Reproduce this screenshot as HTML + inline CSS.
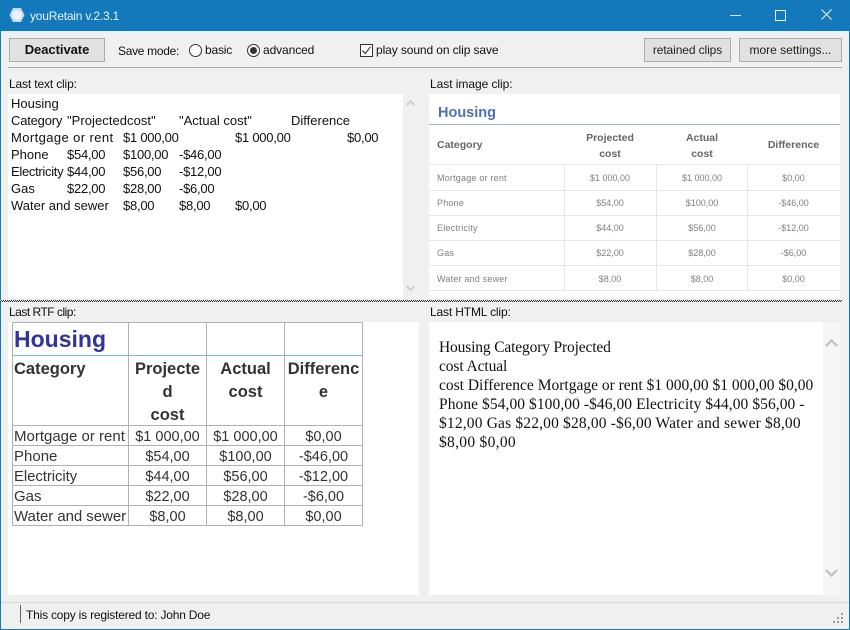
<!DOCTYPE html>
<html><head><meta charset="utf-8"><style>
html,body{margin:0;padding:0;background:#f0f0f0}
#w{position:relative;width:850px;height:630px;overflow:hidden;background:#f0f0f0;font:12px "Liberation Sans",sans-serif;color:#111}
#w div{position:absolute;white-space:nowrap}
.b{background:#e1e1e1;border:1px solid #adadad;box-sizing:border-box;text-align:center;color:#222}
.wh{background:#fff}
.l{line-height:16px;height:16px}
.tx{font-size:13px;line-height:17px;letter-spacing:0}
.n{letter-spacing:-.25px}
.img{color:#808080;font-size:9px;line-height:12px;text-align:center}
.il{letter-spacing:.2px}
.imgb{color:#666;font-weight:bold;font-size:10.5px;line-height:16px;text-align:center}
.ln{background:#e6e6e6}
.r{font-size:15px;line-height:20px;color:#333;margin-top:1px}
.c{text-align:center;font-size:14.5px}
.rb{font-size:16.5px;font-weight:bold;line-height:23px;color:#333;text-align:center;margin-top:1px}
.g{background:#b0b0b0}
.h{font:15.5px "Liberation Serif",serif;line-height:19px;color:#111;left:439px}
</style></head><body><div id="w">

<div style="left:0;top:0;width:850px;height:31px;background:#1479bb"></div>
<div style="left:0;top:0;width:1px;height:630px;background:#1479bb"></div>
<div style="left:849px;top:0;width:1px;height:630px;background:#1479bb"></div>
<div style="left:0;top:629px;width:850px;height:1px;background:#1479bb"></div>
<svg style="position:absolute;left:9px;top:7px" width="16" height="16" viewBox="0 0 16 16"><polygon points="4,1 12,1 15.5,8 12,15 4,15 .5,8" fill="#c4d9f6"/><circle cx="8" cy="8" r="5" fill="#eaf2fe"/></svg>
<div style="left:30px;top:8px;color:#e6f1f8;font-size:12px;line-height:16px;letter-spacing:-.2px">youRetain v.2.3.1</div>
<div style="left:730px;top:15px;width:11px;height:1px;background:#dbeaf5"></div>
<div style="left:775px;top:10px;width:9px;height:9px;border:1px solid #e6f1f8"></div>
<svg style="position:absolute;left:821px;top:9px" width="11" height="11" viewBox="0 0 11 11"><path d="M.5.5L10.5 10.5M10.5.5L.5 10.5" stroke="#e6f1f8" stroke-width="1.1" fill="none"/></svg>

<div class="b" style="left:9px;top:38px;width:96px;height:24px;font-weight:bold;font-size:13px;line-height:22px;color:#111;letter-spacing:-.05px">Deactivate</div>
<div class="l" style="left:118px;top:43px;letter-spacing:-.3px">Save mode:</div>
<div style="left:189px;top:44px;width:11px;height:11px;border:1px solid #333;border-radius:50%;background:#fff"></div>
<div class="l" style="left:205px;top:42px;letter-spacing:-.2px">basic</div>
<div style="left:247px;top:44px;width:11px;height:11px;border:1px solid #333;border-radius:50%;background:#fff"></div>
<div style="left:250px;top:47px;width:7px;height:7px;border-radius:50%;background:#333"></div>
<div class="l" style="left:263px;top:42px;letter-spacing:-.1px">advanced</div>
<div style="left:360px;top:44px;width:11px;height:11px;border:1px solid #333;background:#fff"></div>
<svg style="position:absolute;left:361px;top:45px" width="11" height="11" viewBox="0 0 11 11"><path d="M1.5 5.5L4.2 8.5L9.5 1.8" stroke="#333" stroke-width="1.1" fill="none"/></svg>
<div class="l" style="left:376px;top:42px;letter-spacing:-.1px">play sound on clip save</div>
<div class="b" style="left:644px;top:38px;width:87px;height:24px;line-height:22px;letter-spacing:-.1px">retained clips</div>
<div class="b" style="left:739px;top:38px;width:103px;height:24px;line-height:22px">more settings...</div>
<div style="left:8px;top:67px;width:834px;height:1px;background:#a8a8a8"></div>

<div class="l" style="left:9px;top:76px;letter-spacing:-.15px">Last text clip:</div>
<div class="l" style="left:430px;top:76px;letter-spacing:-.05px">Last image clip:</div>
<div class="l" style="left:9px;top:304px;letter-spacing:-.5px">Last RTF clip:</div>
<div class="l" style="left:430px;top:304px;letter-spacing:-.15px">Last HTML clip:</div>

<div class="wh" style="left:8px;top:94px;width:395px;height:204px"></div>
<svg style="position:absolute;left:405px;top:99px" width="11" height="8" viewBox="0 0 11 8"><path d="M1.5 6L5.5 2L9.5 6" stroke="#d0d0d0" stroke-width="2" fill="none"/></svg>
<svg style="position:absolute;left:405px;top:284px" width="11" height="8" viewBox="0 0 11 8"><path d="M1.5 2L5.5 6L9.5 2" stroke="#d0d0d0" stroke-width="2" fill="none"/></svg>
<div class="tx" style="left:11px;top:95px">Housing</div>
<div class="tx" style="left:11px;top:112px;letter-spacing:-.2px">Category</div>
<div class="tx" style="left:67px;top:112px;letter-spacing:.05px">"Projectedcost"</div>
<div class="tx" style="left:179px;top:112px">"Actual cost"</div>
<div class="tx" style="left:291px;top:112px">Difference</div>
<div class="tx" style="left:11px;top:129px;letter-spacing:.4px">Mortgage or rent</div>
<div class="tx n" style="left:123px;top:129px">$1 000,00</div>
<div class="tx n" style="left:235px;top:129px">$1 000,00</div>
<div class="tx n" style="left:347px;top:129px">$0,00</div>
<div class="tx" style="left:11px;top:146px">Phone</div>
<div class="tx n" style="left:67px;top:146px">$54,00</div>
<div class="tx n" style="left:123px;top:146px">$100,00</div>
<div class="tx n" style="left:179px;top:146px">-$46,00</div>
<div class="tx" style="left:11px;top:163px;letter-spacing:-.3px">Electricity</div>
<div class="tx n" style="left:67px;top:163px">$44,00</div>
<div class="tx n" style="left:123px;top:163px">$56,00</div>
<div class="tx n" style="left:179px;top:163px">-$12,00</div>
<div class="tx" style="left:11px;top:180px">Gas</div>
<div class="tx n" style="left:67px;top:180px">$22,00</div>
<div class="tx n" style="left:123px;top:180px">$28,00</div>
<div class="tx n" style="left:179px;top:180px">-$6,00</div>
<div class="tx" style="left:11px;top:197px">Water and sewer</div>
<div class="tx n" style="left:123px;top:197px">$8,00</div>
<div class="tx n" style="left:179px;top:197px">$8,00</div>
<div class="tx n" style="left:235px;top:197px">$0,00</div>

<div class="wh" style="left:429px;top:94px;width:411px;height:204px"></div>
<div style="left:438px;top:103px;font-size:14.5px;font-weight:bold;line-height:20px;color:#4f72b5">Housing</div>
<div style="left:429px;top:124px;width:411px;height:1px;background:#9cb6d4"></div>
<div class="imgb" style="left:437px;top:137px">Category</div>
<div class="imgb" style="left:565px;top:130px;width:90px">Projected</div>
<div class="imgb" style="left:565px;top:146px;width:90px">cost</div>
<div class="imgb" style="left:657px;top:130px;width:90px">Actual</div>
<div class="imgb" style="left:657px;top:146px;width:90px">cost</div>
<div class="imgb" style="left:748px;top:137px;width:91px">Difference</div>
<div class="ln" style="left:429px;top:164px;width:411px;height:1px"></div>
<div class="ln" style="left:429px;top:190px;width:411px;height:1px"></div>
<div class="ln" style="left:429px;top:215px;width:411px;height:1px"></div>
<div class="ln" style="left:429px;top:240px;width:411px;height:1px"></div>
<div class="ln" style="left:429px;top:265px;width:411px;height:1px"></div>
<div class="ln" style="left:429px;top:290px;width:411px;height:1px"></div>
<div class="ln" style="left:564px;top:165px;width:1px;height:125px"></div>
<div class="ln" style="left:656px;top:165px;width:1px;height:125px"></div>
<div class="ln" style="left:747px;top:165px;width:1px;height:125px"></div>
<div class="img il" style="left:437px;top:172px">Mortgage or rent</div>
<div class="img il" style="left:437px;top:197px">Phone</div>
<div class="img il" style="left:437px;top:222px">Electricity</div>
<div class="img il" style="left:437px;top:247px">Gas</div>
<div class="img il" style="left:437px;top:273px">Water and sewer</div>
<div class="img" style="left:565px;top:172px;width:90px">$1 000,00</div>
<div class="img" style="left:657px;top:172px;width:90px">$1 000,00</div>
<div class="img" style="left:748px;top:172px;width:91px">$0,00</div>
<div class="img" style="left:565px;top:197px;width:90px">$54,00</div>
<div class="img" style="left:657px;top:197px;width:90px">$100,00</div>
<div class="img" style="left:748px;top:197px;width:91px">-$46,00</div>
<div class="img" style="left:565px;top:222px;width:90px">$44,00</div>
<div class="img" style="left:657px;top:222px;width:90px">$56,00</div>
<div class="img" style="left:748px;top:222px;width:91px">-$12,00</div>
<div class="img" style="left:565px;top:247px;width:90px">$22,00</div>
<div class="img" style="left:657px;top:247px;width:90px">$28,00</div>
<div class="img" style="left:748px;top:247px;width:91px">-$6,00</div>
<div class="img" style="left:565px;top:273px;width:90px">$8,00</div>
<div class="img" style="left:657px;top:273px;width:90px">$8,00</div>
<div class="img" style="left:748px;top:273px;width:91px">$0,00</div>

<div style="left:0;top:300px;width:842px;height:2px;background:repeating-conic-gradient(#222 0 25%,#f0f0f0 0 50%) 0 0/2px 2px"></div>

<div class="wh" style="left:8px;top:322px;width:411px;height:273px"></div>
<div class="g" style="left:12px;top:322px;width:351px;height:1px"></div>
<div style="left:12px;top:355px;width:351px;height:1px;background:#6fc3c8"></div>
<div class="g" style="left:12px;top:425px;width:351px;height:1px"></div>
<div class="g" style="left:12px;top:445px;width:351px;height:1px"></div>
<div class="g" style="left:12px;top:465px;width:351px;height:1px"></div>
<div class="g" style="left:12px;top:485px;width:351px;height:1px"></div>
<div class="g" style="left:12px;top:505px;width:351px;height:1px"></div>
<div class="g" style="left:12px;top:525px;width:351px;height:1px"></div>
<div class="g" style="left:12px;top:322px;width:1px;height:204px"></div>
<div class="g" style="left:128px;top:322px;width:1px;height:204px"></div>
<div class="g" style="left:206px;top:322px;width:1px;height:204px"></div>
<div class="g" style="left:284px;top:322px;width:1px;height:204px"></div>
<div class="g" style="left:362px;top:322px;width:1px;height:204px"></div>
<div style="left:14px;top:324px;font-size:23px;font-weight:bold;line-height:30px;color:#333399">Housing</div>
<div class="rb" style="left:14px;top:357px">Category</div>
<div class="rb" style="left:129px;top:357px;width:77px">Projecte</div>
<div class="rb" style="left:129px;top:380px;width:77px">d</div>
<div class="rb" style="left:129px;top:403px;width:77px">cost</div>
<div class="rb" style="left:207px;top:357px;width:77px">Actual</div>
<div class="rb" style="left:207px;top:380px;width:77px">cost</div>
<div class="rb" style="left:285px;top:357px;width:77px">Differenc</div>
<div class="rb" style="left:285px;top:380px;width:77px">e</div>
<div class="r" style="left:14px;top:426px">Mortgage or rent</div>
<div class="r" style="left:14px;top:446px">Phone</div>
<div class="r" style="left:14px;top:466px;letter-spacing:-.1px">Electricity</div>
<div class="r" style="left:14px;top:486px">Gas</div>
<div class="r" style="left:14px;top:506px;letter-spacing:-.05px">Water and sewer</div>
<div class="r c" style="left:129px;top:426px;width:77px">$1 000,00</div>
<div class="r c" style="left:207px;top:426px;width:77px">$1 000,00</div>
<div class="r c" style="left:285px;top:426px;width:77px">$0,00</div>
<div class="r c" style="left:129px;top:446px;width:77px">$54,00</div>
<div class="r c" style="left:207px;top:446px;width:77px">$100,00</div>
<div class="r c" style="left:285px;top:446px;width:77px">-$46,00</div>
<div class="r c" style="left:129px;top:466px;width:77px">$44,00</div>
<div class="r c" style="left:207px;top:466px;width:77px">$56,00</div>
<div class="r c" style="left:285px;top:466px;width:77px">-$12,00</div>
<div class="r c" style="left:129px;top:486px;width:77px">$22,00</div>
<div class="r c" style="left:207px;top:486px;width:77px">$28,00</div>
<div class="r c" style="left:285px;top:486px;width:77px">-$6,00</div>
<div class="r c" style="left:129px;top:506px;width:77px">$8,00</div>
<div class="r c" style="left:207px;top:506px;width:77px">$8,00</div>
<div class="r c" style="left:285px;top:506px;width:77px">$0,00</div>

<div class="wh" style="left:429px;top:322px;width:394px;height:273px"></div>
<div style="left:823px;top:322px;width:17px;height:273px;background:#f6f6f6"></div>
<svg style="position:absolute;left:825px;top:338px" width="13" height="10" viewBox="0 0 13 10"><path d="M1 8L6.5 2.5L12 8" stroke="#c4c4c4" stroke-width="2.4" fill="none"/></svg>
<svg style="position:absolute;left:825px;top:568px" width="13" height="10" viewBox="0 0 13 10"><path d="M1 2L6.5 7.5L12 2" stroke="#c4c4c4" stroke-width="2.4" fill="none"/></svg>
<div class="h" style="top:338px;letter-spacing:-.15px">Housing Category Projected</div>
<div class="h" style="top:357px;letter-spacing:-.1px">cost Actual</div>
<div class="h" style="top:376px">cost Difference Mortgage or rent $1 000,00 $1 000,00 $0,00</div>
<div class="h" style="top:395px;letter-spacing:.07px">Phone $54,00 $100,00 -$46,00 Electricity $44,00 $56,00 -</div>
<div class="h" style="top:414px;letter-spacing:.17px">$12,00 Gas $22,00 $28,00 -$6,00 Water and sewer $8,00</div>
<div class="h" style="top:433px;letter-spacing:.3px">$8,00 $0,00</div>

<div style="left:1px;top:602px;width:848px;height:1px;background:#d6d6d6"></div>
<div style="left:20px;top:605px;width:1px;height:18px;background:#666"></div>
<div class="l" style="left:26px;top:607px;letter-spacing:-.2px">This copy is registered to: John Doe</div>
<svg style="position:absolute;left:832px;top:612px" width="12" height="12" viewBox="0 0 12 12" fill="#999"><rect x="9" y="1" width="2" height="2"/><rect x="5" y="5" width="2" height="2"/><rect x="9" y="5" width="2" height="2"/><rect x="1" y="9" width="2" height="2"/><rect x="5" y="9" width="2" height="2"/><rect x="9" y="9" width="2" height="2"/></svg>
</div></body></html>
